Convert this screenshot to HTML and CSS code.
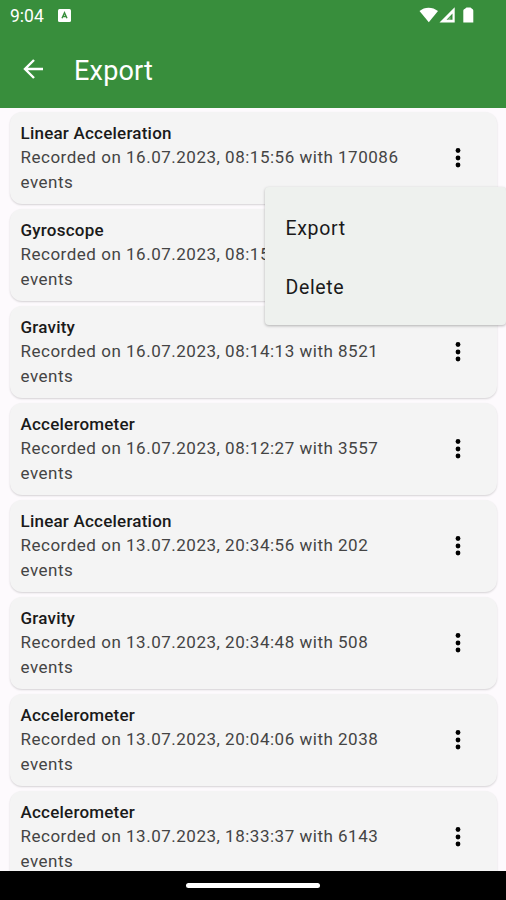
FILE: index.html
```
<!DOCTYPE html>
<html lang="en">
<head>
<meta charset="utf-8">
<title>Export</title>
<link rel="stylesheet" href="styles.css">
</head>
<body>
<div class="screen">
  <header class="header">
    <div class="status">
      <span class="clock">9:04</span>
      <svg class="badge" width="13" height="13" viewBox="0 0 13 13"><rect width="13" height="13" rx="1.500" fill="#fff"/><path d="M4 9.200 6.500 3.700 9 9.200M5 7.500h3" fill="none" stroke="#388e3c" stroke-width="1.400"/></svg>
      <svg class="signals" width="56" height="18" viewBox="0 0 56 18"><path d="M.5 5C5.500 .5 13.500 .5 19 5L9.800 16.200Z" fill="#fff"/><path fill-rule="evenodd" d="M35.700 1.300V16.500H20.500ZM33.500 7.500 27.500 13.700H33.500Z" fill="#fff"/><path d="M31.500 10.500V13.700H28.500Z" fill="#fff" opacity=".35"/><path d="M44.300 4.500Q44.300 3.300 46 2.800L47.500 1.500h4L53 2.800Q54.300 3.300 54.300 4.500V16.500H44.300Z" fill="#fff"/></svg>
    </div>
    <div class="toolbar">
      <svg class="back" width="22" height="22" viewBox="0 0 22 22"><path d="M20 11H2M11 2 2 11 11 20" fill="none" stroke="#fff" stroke-width="2.400"/></svg>
      <h1 class="title">Export</h1>
    </div>
  </header>
  <main class="list" id="list"></main>
  <div class="menu"><div class="menu-item">Export</div><div class="menu-item">Delete</div></div>
  <footer class="navbar"><div class="handle"></div></footer>
</div>
<script src="app.js"></script>
</body>
</html>
```
FILE: styles.css
```
* { box-sizing: border-box; }
body { margin: 0; font-family: Roboto, sans-serif; color: #1a1a1a; }
.screen { position: relative; display: flex; flex-direction: column; width: 506px; height: 900px; overflow: hidden; background: #fff; }
.header { flex: 0 0 108px; background: #388e3c; color: #fff; }
.status { display: flex; align-items: center; height: 32px; padding: 0 31px 0 10px; }
.clock { width: 48px; font-size: 17.5px; }
.signals { margin-left: auto; margin-top: -3px; }
.badge { margin-top: -1px; }
.toolbar { display: flex; align-items: center; height: 76px; padding: 0 24px; }
.back { margin: -2px 0 0 -1px; }
.title { margin: 2px 0 0 29px; font-size: 27px; font-weight: 400; letter-spacing: .2px; }
.list { flex: 1; min-height: 0; overflow: hidden; display: flex; flex-direction: column; gap: 5px; padding: 4px 9px 0 10px; background: #fdfafd; }
.card { flex: 0 0 92px; display: flex; align-items: center; justify-content: space-between; padding: 0 36px 0 10.5px; border-radius: 12px; background: #f4f4f4; box-shadow: 0 1px 2px rgba(0,0,0,.16); }
.info { width: 390px; padding-top: 1px; }
.name { font-size: 17px; line-height: 23px; font-weight: 500; letter-spacing: .22px; }
.detail { font-size: 17px; line-height: 25px; letter-spacing: .51px; color: #444; }
.dots { flex: none; }
.menu { position: absolute; left: 265px; top: 187px; width: 241px; height: 138px; padding: 12px 0 8px; border-radius: 4px; background: #eef1ee; box-shadow: 0 1px 3px rgba(0,0,0,.28); }
.menu-item { height: 59px; line-height: 59px; padding-left: 20.5px; font-size: 19.5px; letter-spacing: .65px; }
.navbar { flex: 0 0 29px; display: flex; align-items: center; justify-content: center; background: #000; }
.handle { width: 134px; height: 5px; border-radius: 2.5px; background: #fff; }
```
FILE: app.js
```
const recordings = [
  ["Linear Acceleration", "16.07.2023, 08:15:56", 170086],
  ["Gyroscope", "16.07.2023, 08:15:12", 8100],
  ["Gravity", "16.07.2023, 08:14:13", 8521],
  ["Accelerometer", "16.07.2023, 08:12:27", 3557],
  ["Linear Acceleration", "13.07.2023, 20:34:56", 202],
  ["Gravity", "13.07.2023, 20:34:48", 508],
  ["Accelerometer", "13.07.2023, 20:04:06", 2038],
  ["Accelerometer", "13.07.2023, 18:33:37", 6143]
];
document.getElementById("list").innerHTML = recordings.map(([name, time, count]) => `
  <article class="card">
    <div class="info">
      <div class="name">${name}</div>
      <div class="detail">Recorded on ${time} with ${count}<br>events</div>
    </div>
    <svg class="dots" width="6" height="20" viewBox="0 0 6 20"><circle cx="3" cy="2.500" r="2.400"/><circle cx="3" cy="10" r="2.400"/><circle cx="3" cy="17" r="2.400"/></svg>
  </article>`).join("");
```
